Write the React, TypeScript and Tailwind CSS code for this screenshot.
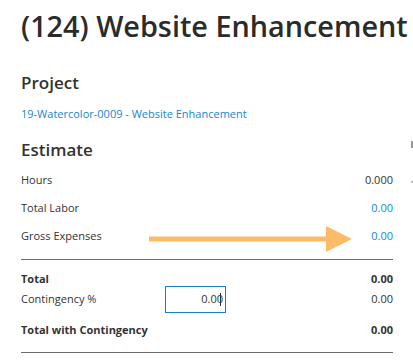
export default function App() {
  const font = { fontFamily: '"Open Sans", "Noto Sans", sans-serif' };
  return (
    <div className="w-[413px] h-[363px] bg-white overflow-hidden relative text-[#333]" style={font}>
      <div className="pl-[21px] pr-[20px]">
        <h1 className="text-[28.8px] leading-none font-semibold text-[#2b2b2b] mt-[12px] whitespace-nowrap">
          (124) Website Enhancement
        </h1>

        <h2 className="text-[17px] font-semibold text-[#333] mt-[33px] leading-none">Project</h2>
        <a className="block text-[11px] text-[#1587cf] mt-[17px] leading-none">
          19-Watercolor-0009 - Website Enhancement
        </a>

        <h2 className="text-[17px] font-semibold text-[#333] mt-[22px] leading-none">Estimate</h2>

        <div className="mt-[15px] flex flex-col gap-[14px] text-[11px] leading-[14px]">
          <div className="flex justify-between">
            <span>Hours</span>
            <span>0.000</span>
          </div>
          <div className="flex justify-between">
            <span>Total Labor</span>
            <span className="text-[#1587cf]">0.00</span>
          </div>
          <div className="flex justify-between">
            <span>Gross Expenses</span>
            <span className="text-[#1587cf]">0.00</span>
          </div>
        </div>

        <div className="border-t border-[#6b6b6b] mt-[16px]" />

        <div className="text-[11px] leading-[14px] mt-[12px]">
          <div className="flex justify-between font-bold">
            <span>Total</span>
            <span>0.00</span>
          </div>
          <div className="flex items-center">
            <span className="w-[144px]">Contingency %</span>
            <div className="w-[61px] h-[27px] border border-[#1a7fc1] flex items-center justify-end pr-[4px]">
              <span>0.00</span>
              <span className="w-px h-[13px] bg-[#333] -ml-[3px]" />
            </div>
            <span className="ml-auto">0.00</span>
          </div>
          <div className="flex justify-between font-bold mt-[10px]">
            <span>Total with Contingency</span>
            <span>0.00</span>
          </div>
        </div>

        <div className="border-t border-[#6b6b6b] mt-[15px]" />
      </div>

      {/* annotation arrow */}
      <svg className="absolute left-[149px] top-[226px]" width="205" height="26" viewBox="0 0 205 26">
        <rect x="0" y="10.5" width="180" height="5" fill="#fcbb68" />
        <polygon points="177,0 203,13 177,26" fill="#fcbb68" />
      </svg>

      {/* clipped sidebar bits on the right edge */}
      <div className="absolute left-[411px] top-[141px] w-[2px] h-[7px] bg-[#999]" />
      <div className="absolute left-[411px] top-[181px] w-[2px] h-[2px] bg-[#bbb]" />
    </div>
  );
}
